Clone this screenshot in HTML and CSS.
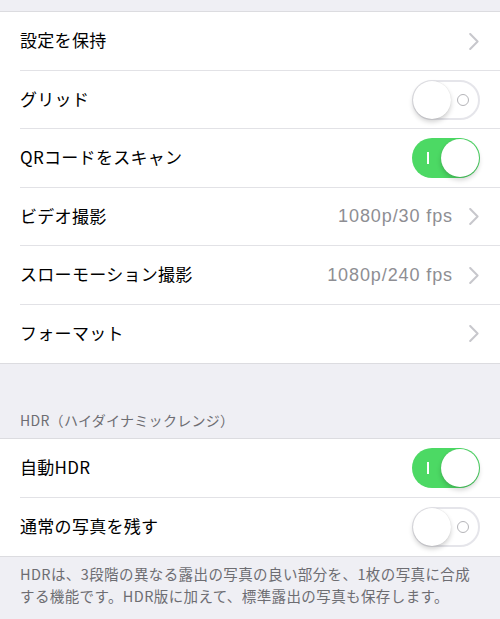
FILE: index.html
```html
<!DOCTYPE html>
<html lang="ja">
<head>
<meta charset="utf-8">
<link rel="stylesheet" href="styles.css">
</head>
<body>
<div class="page">
  <div class="group first">
    <div class="row"><span class="label">設定を保持</span><span class="right"><svg class="chev" viewBox="0 0 10 17"><polyline points="1.2,1 8.6,8.5 1.2,16"/></svg></span></div>
    <div class="row"><span class="label">グリッド</span><span class="toggle off"><span class="mark"></span><span class="knob"></span></span></div>
    <div class="row"><span class="label">QRコードをスキャン</span><span class="toggle on"><span class="mark"></span><span class="knob"></span></span></div>
    <div class="row"><span class="label">ビデオ撮影</span><span class="right"><span class="value">1080p/30 fps</span><svg class="chev" viewBox="0 0 10 17"><polyline points="1.2,1 8.6,8.5 1.2,16"/></svg></span></div>
    <div class="row"><span class="label">スローモーション撮影</span><span class="right"><span class="value">1080p/240 fps</span><svg class="chev" viewBox="0 0 10 17"><polyline points="1.2,1 8.6,8.5 1.2,16"/></svg></span></div>
    <div class="row"><span class="label">フォーマット</span><span class="right"><svg class="chev" viewBox="0 0 10 17"><polyline points="1.2,1 8.6,8.5 1.2,16"/></svg></span></div>
  </div>
  <div class="header">HDR（ハイダイナミックレンジ）</div>
  <div class="group">
    <div class="row"><span class="label">自動HDR</span><span class="toggle on"><span class="mark"></span><span class="knob"></span></span></div>
    <div class="row"><span class="label">通常の写真を残す</span><span class="toggle off"><span class="mark"></span><span class="knob"></span></span></div>
  </div>
  <div class="footer">HDRは、3段階の異なる露出の写真の良い部分を、1枚の写真に合成する機能です。HDR版に加えて、標準露出の写真も保存します。</div>
</div>
</body>
</html>
```

FILE: styles.css
```css
html, body {
  margin: 0;
  padding: 0;
  background: #efeff4;
}
body {
  font-family: "Noto Sans CJK JP", "Liberation Sans", sans-serif;
  width: 500px;
  height: 619px;
  overflow: hidden;
}
.page {
  padding-top: 11px;
}
.group {
  background: #fff;
  border-top: 1px solid #dcdce0;
  border-bottom: 1px solid #dcdce0;
}
.row {
  height: 58.5px;
  box-sizing: border-box;
  display: flex;
  align-items: center;
  justify-content: space-between;
  padding: 0 20px 0 20px;
  position: relative;
}
.row + .row::before {
  content: "";
  position: absolute;
  top: -1px;
  left: 20px;
  right: 0;
  height: 1px;
  background: #e2e2e6;
}
.label {
  font-size: 17px;
  color: #000;
  letter-spacing: 0.3px;
  margin-top: -3px;
}
.right {
  display: flex;
  align-items: center;
  gap: 16px;
  margin-right: 1px;
}
.value {
  font-family: "Liberation Sans", "Noto Sans CJK JP", sans-serif;
  font-size: 18px;
  letter-spacing: 0.9px;
  color: #8e8e93;
}
.chev {
  width: 10px;
  height: 17px;
  display: block;
  fill: none;
  stroke: #c7c7cc;
  stroke-width: 2;
  stroke-linecap: round;
  stroke-linejoin: round;
}
.toggle {
  width: 68px;
  height: 40px;
  border-radius: 20px;
  box-sizing: border-box;
  position: relative;
}
.toggle.off {
  background: #fff;
  border: 2px solid #e5e5ea;
}
.toggle.on {
  background: #4cd964;
}
.knob {
  position: absolute;
  width: 38px;
  height: 38px;
  border-radius: 50%;
  background: #fff;
  box-shadow: 0 3px 5px rgba(0,0,0,0.18), 0 0 1px rgba(0,0,0,0.15);
}
.toggle.off .knob {
  left: -1px;
  top: -1px;
}
.toggle.on .knob {
  right: 1px;
  top: 1px;
}
.toggle.off .mark {
  position: absolute;
  right: 9px;
  top: 12px;
  width: 12px;
  height: 12px;
  border: 1.5px solid #b4b4b8;
  border-radius: 50%;
  box-sizing: border-box;
}
.toggle.on .mark {
  position: absolute;
  left: 15px;
  top: 14px;
  width: 1.5px;
  height: 12px;
  background: #fff;
}
.header {
  padding: 46px 20px 0 20px;
  height: 74px;
  box-sizing: border-box;
  font-size: 14px;
  color: #6d6d72;
  letter-spacing: 0.3px;
}
.footer {
  padding: 6px 20px 0 20px;
  font-size: 14.5px;
  letter-spacing: 0.4px;
  line-height: 21.5px;
  color: #6d6d72;
}
```
